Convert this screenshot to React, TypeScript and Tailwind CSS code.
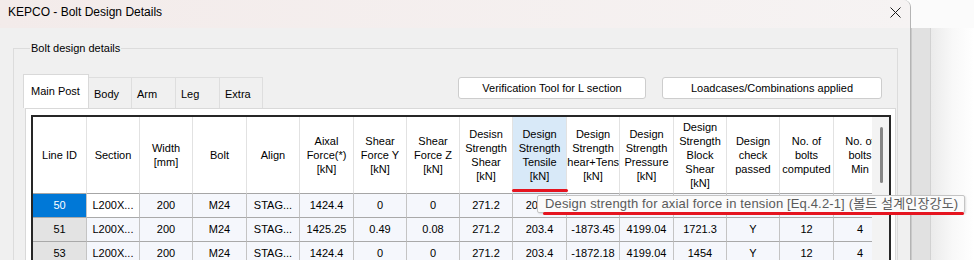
import React from "react";

const headers: string[][] = [
    ["Line ID"],
    ["Section"],
    ["Width", "[mm]"],
    ["Bolt"],
    ["Align"],
    ["Aixal", "Force(*)", "[kN]"],
    ["Shear", "Force Y", "[kN]"],
    ["Shear", "Force Z", "[kN]"],
    ["Desisn", "Strength", "Shear", "[kN]"],
    ["Design", "Strength", "Tensile", "[kN]"],
    ["Design", "Strength", "Shear+Tens", "[kN]"],
    ["Design", "Strength", "Pressure", "[kN]"],
    ["Design", "Strength", "Block", "Shear", "[kN]"],
    ["Design", "check", "passed"],
    ["No. of", "bolts", "computed"],
    ["No. of", "bolts", "Min"],
];

const rows: string[][] = [
    ["50", "L200X...", "200", "M24", "STAG...", "1424.4", "0", "0", "271.2", "203.4", "-1872.18", "4199.04", "1721.3", "Y", "12", "4"],
    ["51", "L200X...", "200", "M24", "STAG...", "1425.25", "0.49", "0.08", "271.2", "203.4", "-1873.45", "4199.04", "1721.3", "Y", "12", "4"],
    ["53", "L200X...", "200", "M24", "STAG...", "1424.4", "0", "0", "271.2", "203.4", "-1872.18", "4199.04", "1454", "Y", "12", "4"],
];

const tabs = [
    { label: "Body", w: "w-[43px]" },
    { label: "Arm", w: "w-[44px]" },
    { label: "Leg", w: "w-[44px]" },
    { label: "Extra", w: "w-[43px]" },
];

function HeaderCell({ lines, idx }: { lines: string[]; idx: number }) {
    const active = idx === 9;
    return (
        <div
            className={`h-[77px] border-r border-b border-r-[#e2e2e2] border-b-[#a6a6a6] flex flex-col items-center justify-center overflow-hidden leading-[14px] ${active ? "bg-[#d8e9f8]" : "bg-white"}`}
        >
            {lines.map((l) => (
                <span key={l} className={`whitespace-nowrap ${l === "Shear+Tens" ? "self-end" : ""}`}>
                    {l}
                </span>
            ))}
        </div>
    );
}

function DataCell({ value, r, c }: { value: string; r: number; c: number }) {
    let bg = "bg-[#f5f7fc]";
    let text = "text-black";
    if (c === 0) {
        bg = r === 0 ? "bg-[#0078d7]" : "bg-[#e3e3e3]";
        text = r === 0 ? "text-white" : "text-black";
    } else if (r === 0 && c === 1) {
        bg = "bg-white";
    }
    return (
        <div
            className={`h-[24px] border-r border-b border-r-[#c4c4c4] border-b-[#a9a9a9] flex items-center justify-center overflow-hidden whitespace-nowrap ${bg} ${text}`}
        >
            {value}
        </div>
    );
}

export default function App() {
    return (
        <div className="relative w-[974px] h-[260px] overflow-hidden flex bg-white font-['Liberation_Sans',Arial,sans-serif] text-[11px] text-black">
            {/* dialog window */}
            <div className="w-[911px] h-full flex flex-col bg-[#f0f0f0] rounded-tr-[7px] border-r border-[#b4b4b4] shrink-0">
                {/* title bar */}
                <div className="h-[28px] flex items-start justify-between bg-gradient-to-r from-[#f3ebea] to-[#f6f3f3] rounded-tr-[7px] pl-[8px] pr-[9px]">
                    <span className="text-[12px] leading-[16px] pt-[4px]">KEPCO - Bolt Design Details</span>
                    <svg className="mt-[7px]" width="11" height="11" viewBox="0 0 11 11" fill="none" stroke="#1a1a1a" strokeWidth="1">
                        <path d="M0.5 0.5L10.5 10.5M10.5 0.5L0.5 10.5" />
                    </svg>
                </div>

                {/* client area */}
                <div className="flex-1 pl-[13px] pt-[13px] overflow-hidden">
                    <fieldset className="w-[885px] h-[260px] border border-[#dcdcdc] pl-[9px] pt-[19px]">
                        <legend className="ml-[7px] px-[1px] leading-[14px]">Bolt design details</legend>

                        {/* tab strip */}
                        <div className="flex items-end h-[34px] w-[873px]">
                            <div className="w-[66px] h-[34px] bg-white border border-b-0 border-[#d9d9d9] pl-[7px] pt-[9px] leading-[14px]">
                                Main Post
                            </div>
                            {tabs.map((t) => (
                                <div
                                    key={t.label}
                                    className={`${t.w} h-[31px] bg-[#f0f0f0] border border-b-0 border-l-0 border-[#dedede] pl-[5px] pt-[9px] leading-[14px]`}
                                >
                                    {t.label}
                                </div>
                            ))}
                            <div className="ml-auto self-start mt-[3px] mr-[14px] flex gap-[16px]">
                                <button className="w-[188px] h-[22px] bg-white border border-[#cdcdcd] rounded-[3px] leading-[14px]">
                                    Verification Tool for L section
                                </button>
                                <button className="w-[220px] h-[22px] bg-white border border-[#cdcdcd] rounded-[3px] leading-[14px]">
                                    Loadcases/Combinations applied
                                </button>
                            </div>
                        </div>

                        {/* tab page */}
                        <div className="ml-[2px] w-[871px] h-[160px] bg-white border border-[#d9d9d9] pl-[5px] pr-[4px] pt-[6px]">
                            <div className="w-[860px] h-[200px] border-2 border-[#262626] flex">
                                <div className="w-[839px] overflow-hidden">
                                    <div className="grid w-max grid-cols-[54px_53px_53px_54px_53px_54px_53px_53px_53px_54px_53px_54px_53px_53px_54px_53px]">
                                        {headers.map((h, i) => (
                                            <HeaderCell key={i} lines={h} idx={i} />
                                        ))}
                                        {rows.map((row, r) =>
                                            row.map((v, c) => <DataCell key={`${r}-${c}`} value={v} r={r} c={c} />)
                                        )}
                                    </div>
                                </div>
                                {/* vertical scrollbar */}
                                <div className="w-[17px] bg-[#f3f3f3] flex justify-center pt-[10px]">
                                    <div className="w-[3px] h-[56px] rounded-full bg-[#858585] ml-[2px]" />
                                </div>
                            </div>
                        </div>
                    </fieldset>
                </div>
            </div>

            {/* desktop behind the dialog */}
            <div className="flex-1 flex flex-col">
                <div className="h-[28px] bg-[#fbfbfb]" />
                <div className="flex-1 flex">
                    <div className="w-[1px] bg-[#c9c9c9]" />
                    <div className="w-[18px] bg-[#e1e1e1]" />
                    <div className="w-[1px] bg-[#d2d2d2]" />
                    <div className="flex-1 bg-gradient-to-r from-[#ebebeb] via-[#f8f8f8] to-white" />
                </div>
            </div>

            {/* tooltip */}
            <div className="absolute left-[537px] top-[195px] w-[428px] h-[18px] bg-[#fbfbfb] border border-[#c4c4c4] rounded-[2px] shadow-[1px_1px_2px_rgba(0,0,0,0.12)] pl-[7px] text-[13px] leading-[16px] tracking-[0.15px] text-[#5a5a5a] whitespace-nowrap font-['Liberation_Sans','Noto_Sans_CJK_KR',sans-serif]">
                Design strength for axial force in tension [Eq.4.2-1] (볼트 설계인장강도)
            </div>

            {/* red annotation marks */}
            <div className="absolute left-[512px] top-[189px] w-[56px] h-[3px] rounded-full bg-[#e5141f]" />
            <div className="absolute left-[543px] top-[212px] w-[421px] h-[3px] rounded-full bg-[#e5141f]" />
        </div>
    );
}
